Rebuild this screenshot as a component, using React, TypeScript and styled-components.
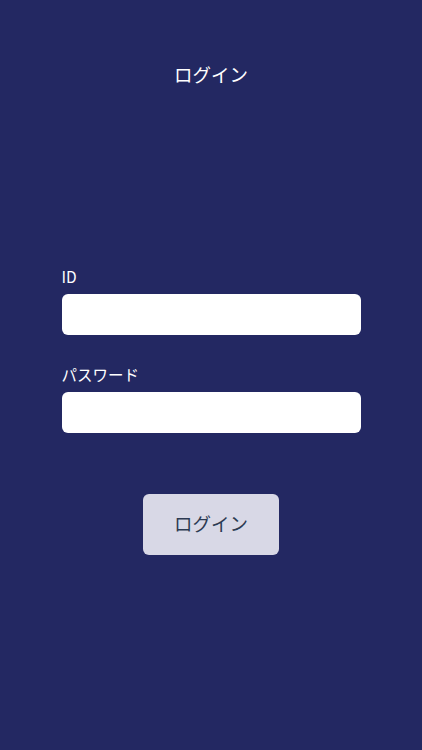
import styled, {createGlobalStyle} from "styled-components"

const GlobalStyle = createGlobalStyle`
	html, body {
		margin: 0;
		padding: 0;
		background: #232862;
	}
	body {
		font-family: "Noto Sans CJK JP", "Noto Sans", sans-serif;
	}
`

const Screen = styled.div`
	width: 422px;
	height: 750px;
	background: #232862;
	display: flex;
	flex-direction: column;
	align-items: center;
`

const Title = styled.h1`
	margin: 62px 0 0;
	font-size: 18.5px;
	line-height: 24px;
	font-weight: 400;
	color: #ffffff;
`

const Form = styled.form`
	width: 299px;
	margin-top: 182px;
	display: flex;
	flex-direction: column;
`

const Field = styled.div`
	display: flex;
	flex-direction: column;
	gap: 9px;
	margin-bottom: 31px;
`

const Label = styled.label`
	font-size: 15.5px;
	line-height: 17px;
	color: #ffffff;
`

const Input = styled.input`
	box-sizing: border-box;
	width: 100%;
	height: 41px;
	border: none;
	border-radius: 6px;
	background: #ffffff;
	padding: 0 12px;
	font-size: 16px;
	outline: none;
`

const Button = styled.button`
	align-self: center;
	width: 136px;
	height: 61px;
	margin-top: 30px;
	padding: 0 0 4px;
	border: none;
	border-radius: 6px;
	background: #d8d8e6;
	color: #2c3a52;
	font-family: inherit;
	font-size: 18.5px;
`

const App: React.FC = () => {
	return (
		<Screen>
			<GlobalStyle />
			<Title>ログイン</Title>
			<Form onSubmit={e => e.preventDefault()}>
				<Field>
					<Label htmlFor='login-id'>ID</Label>
					<Input id='login-id' type='text' />
				</Field>
				<Field>
					<Label htmlFor='login-pw'>パスワード</Label>
					<Input id='login-pw' type='password' />
				</Field>
				<Button type='submit'>ログイン</Button>
			</Form>
		</Screen>
	)
}

export default App
